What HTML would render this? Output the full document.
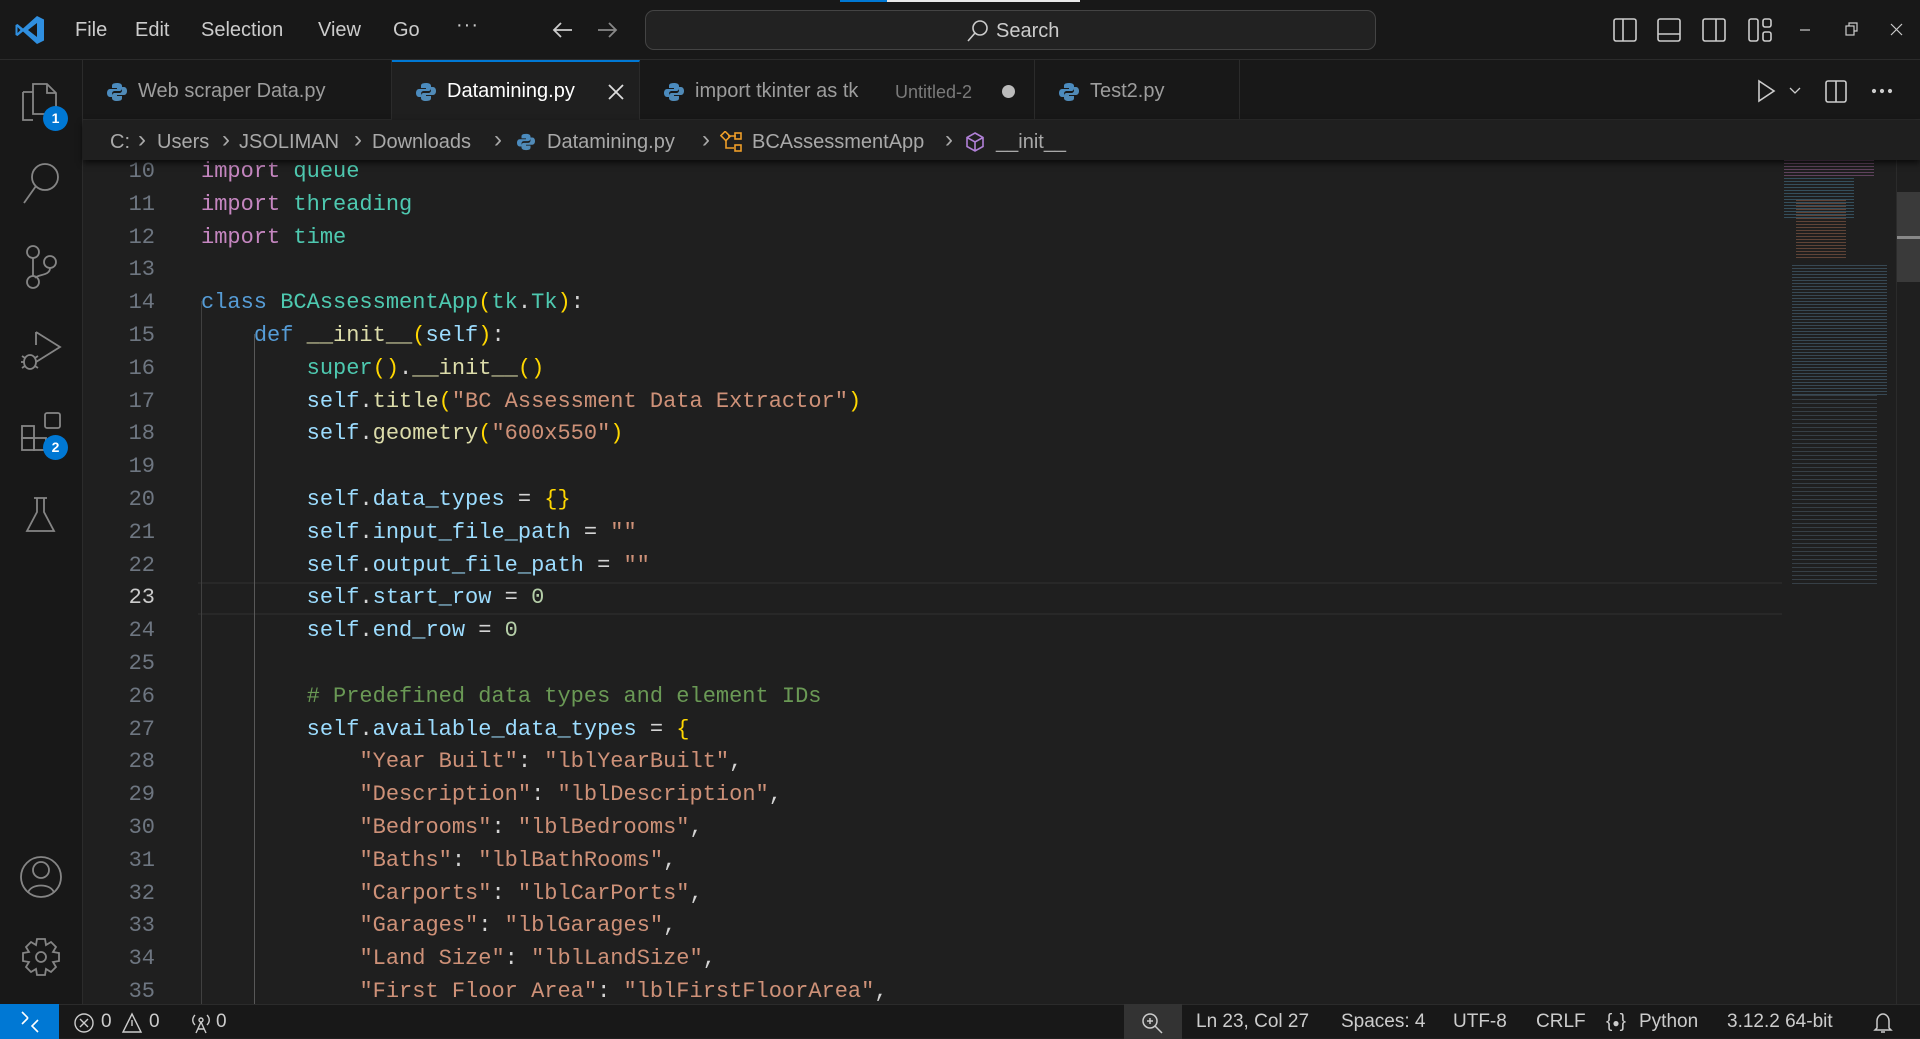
<!DOCTYPE html>
<html><head><meta charset="utf-8">
<style>
*{margin:0;padding:0;box-sizing:border-box}
body{width:1920px;height:1038px;overflow:hidden;background:#1f1f1f;font-family:"Liberation Sans",sans-serif;color:#ccc;position:relative}
.a{position:absolute}
.tb{left:0;top:0;width:1920px;height:60px;background:#181818;border-bottom:1px solid #2b2b2b}
.menu{top:19px;font-size:20px;color:#ccc}
.tabs{left:83px;top:60px;width:1837px;height:60px;background:#181818;border-bottom:1px solid #2b2b2b}
.tab{top:0;height:60px;border-right:1px solid #2b2b2b;font-size:20px;color:#9d9d9d}
.tab span{position:absolute;top:20px;white-space:nowrap}
.act{left:0;top:60px;width:83px;height:944px;background:#181818;border-right:1px solid #2b2b2b}
.bc{left:83px;top:120px;width:1837px;height:40px;background:#1f1f1f;font-size:20px;color:#a9a9a9;box-shadow:0 3px 6px #000a;z-index:3}
.bc span{position:absolute;top:11px;white-space:nowrap}
.bc i{position:absolute;top:6px;font-style:normal;font-size:24px;color:#a9a9a9}
.code{left:84px;top:160px;width:1698px;height:844px;overflow:hidden}
.ln{position:absolute;left:0;width:71px;text-align:right;font-family:"Liberation Mono",monospace;font-size:22px;color:#6e7681;line-height:32.8px}
.tx{position:absolute;left:117px;font-family:"Liberation Mono",monospace;font-size:22px;color:#d4d4d4;line-height:32.8px;white-space:pre}
.k{color:#c586c0}.t{color:#4ec9b0}.b{color:#569cd6}.f{color:#dcdcaa}.v{color:#9cdcfe}.s{color:#ce9178}.c{color:#6a9955}.y{color:#ffd700}.n{color:#b5cea8}
.sb{left:0;top:1004px;width:1920px;height:34px;background:#181818;border-top:1px solid #2b2b2b;font-size:19px;color:#ccc}
.sb span{position:absolute;top:6px;white-space:nowrap}
</style></head><body>

<div class="a tb"></div>
<div class="a" style="left:840px;top:0;width:47px;height:2px;background:#0078d4"></div>
<div class="a" style="left:887px;top:0;width:193px;height:2px;background:#e8e8e8"></div>
<svg class="a" style="left:14px;top:14px" width="32" height="32" viewBox="0 0 32 32"><path d="M23 2 L30 5.5 V26.5 L23 30 L9 17.5 L3.5 22 L1.5 21 V11 L3.5 10 L9 14.5 Z M23 9 L14 16 L23 23 Z M3.5 13 V19 L6.5 16 Z" fill="#2f8fe0"/></svg>
<div class="a menu" style="left:75px">File</div>
<div class="a menu" style="left:135px">Edit</div>
<div class="a menu" style="left:201px">Selection</div>
<div class="a menu" style="left:318px">View</div>
<div class="a menu" style="left:393px">Go</div>
<div class="a menu" style="left:456px;top:14px;letter-spacing:1px">···</div>
<svg class="a" style="left:550px;top:18px" width="72" height="24" viewBox="0 0 72 24" fill="none" stroke-width="1.8"><path d="M22 12H4M11 5L4 12L11 19" stroke="#ccc"/><path d="M48 12H66M59 5L66 12L59 19" stroke="#888"/></svg>
<div class="a" style="left:645px;top:10px;width:731px;height:40px;background:#222;border:1px solid #444;border-radius:9px"></div>
<svg class="a" style="left:966px;top:19px" width="24" height="24" viewBox="0 0 24 24" fill="none" stroke="#ccc" stroke-width="1.6"><circle cx="14" cy="9" r="7"/><path d="M9 14L2 22"/></svg>
<div class="a" style="left:996px;top:20px;font-size:20px;color:#ccc">Search</div>
<svg class="a" style="left:1610px;top:16px" width="310" height="28" viewBox="0 0 310 28" fill="none" stroke="#ccc" stroke-width="1.6">
<rect x="4" y="3" width="22" height="22" rx="2"/><path d="M13 3V25"/>
<rect x="48" y="3" width="22" height="22" rx="2"/><path d="M48 18H70"/>
<rect x="93" y="3" width="22" height="22" rx="2"/><path d="M106 3V25"/>
<rect x="139" y="3" width="9" height="22" rx="2"/><rect x="153" y="3" width="8" height="8" rx="2"/><rect x="153" y="16" width="8" height="9" rx="2"/>
<path d="M190 14H200" stroke-width="1.2"/>
<rect x="236" y="10" width="8" height="9" stroke-width="1.2"/><path d="M239 10V7H247V15H244" stroke-width="1.2"/>
<path d="M281 8L292 19M292 8L281 19" stroke-width="1.2"/>
</svg>

<div class="a tabs">
 <div class="a tab" style="left:0;width:309px"><svg class="a" style="left:24px;top:22px" width="20" height="20" viewBox="0 0 20 20"><path d="M10 1C5 1 5 3 5 4V6H10V7H3C1 7 0 9 0 11S1 15 3 15H5V12C5 10 6 9 8 9H12C14 9 15 8 15 6V4C15 2 13 1 10 1Z" fill="#4b8bbe"/><path d="M10 19C15 19 15 17 15 16V14H10V13H17C19 13 20 11 20 9S19 5 17 5H15V8C15 10 14 11 12 11H8C6 11 5 12 5 14V16C5 18 7 19 10 19Z" fill="#5a9fd4" opacity=".85"/></svg><span style="left:55px">Web scraper Data.py</span></div>
 <div class="a tab" style="left:309px;width:248px;background:#1f1f1f;border-top:2px solid #0078d4;height:61px"><svg class="a" style="left:24px;top:20px" width="20" height="20" viewBox="0 0 20 20"><path d="M10 1C5 1 5 3 5 4V6H10V7H3C1 7 0 9 0 11S1 15 3 15H5V12C5 10 6 9 8 9H12C14 9 15 8 15 6V4C15 2 13 1 10 1Z" fill="#4b8bbe"/><path d="M10 19C15 19 15 17 15 16V14H10V13H17C19 13 20 11 20 9S19 5 17 5H15V8C15 10 14 11 12 11H8C6 11 5 12 5 14V16C5 18 7 19 10 19Z" fill="#5a9fd4" opacity=".85"/></svg><span style="left:55px;top:18px;color:#fff">Datamining.py</span><svg class="a" style="left:215px;top:21px" width="18" height="18" viewBox="0 0 18 18" stroke="#ddd" stroke-width="1.8"><path d="M2 2L16 16M16 2L2 16"/></svg></div>
 <div class="a tab" style="left:557px;width:395px"><svg class="a" style="left:24px;top:22px" width="20" height="20" viewBox="0 0 20 20"><path d="M10 1C5 1 5 3 5 4V6H10V7H3C1 7 0 9 0 11S1 15 3 15H5V12C5 10 6 9 8 9H12C14 9 15 8 15 6V4C15 2 13 1 10 1Z" fill="#4b8bbe"/><path d="M10 19C15 19 15 17 15 16V14H10V13H17C19 13 20 11 20 9S19 5 17 5H15V8C15 10 14 11 12 11H8C6 11 5 12 5 14V16C5 18 7 19 10 19Z" fill="#5a9fd4" opacity=".85"/></svg><span style="left:55px">import tkinter as tk</span><span style="left:255px;top:22px;font-size:18px;color:#7a7a7a">Untitled-2</span><div class="a" style="left:362px;top:25px;width:13px;height:13px;border-radius:50%;background:#bbb"></div></div>
 <div class="a tab" style="left:952px;width:205px"><svg class="a" style="left:24px;top:22px" width="20" height="20" viewBox="0 0 20 20"><path d="M10 1C5 1 5 3 5 4V6H10V7H3C1 7 0 9 0 11S1 15 3 15H5V12C5 10 6 9 8 9H12C14 9 15 8 15 6V4C15 2 13 1 10 1Z" fill="#4b8bbe"/><path d="M10 19C15 19 15 17 15 16V14H10V13H17C19 13 20 11 20 9S19 5 17 5H15V8C15 10 14 11 12 11H8C6 11 5 12 5 14V16C5 18 7 19 10 19Z" fill="#5a9fd4" opacity=".85"/></svg><span style="left:55px">Test2.py</span></div>
</div>
<svg class="a" style="left:1752px;top:77px" width="150" height="28" viewBox="0 0 150 28" fill="none" stroke="#ccc" stroke-width="1.6">
<path d="M7 4L22 14L7 24Z"/><path d="M38 11L43 16L48 11" stroke-width="1.3"/>
<rect x="74" y="4" width="20" height="21" rx="2"/><path d="M84 4V25"/>
<circle cx="122" cy="14" r="1.3" fill="#ccc"/><circle cx="130" cy="14" r="1.3" fill="#ccc"/><circle cx="138" cy="14" r="1.3" fill="#ccc"/>
</svg>

<div class="a bc">
 <span style="left:27px">C:</span><i style="left:55px">›</i>
 <span style="left:74px">Users</span><i style="left:139px">›</i>
 <span style="left:156px">JSOLIMAN</span><i style="left:271px">›</i>
 <span style="left:289px">Downloads</span><i style="left:411px">›</i>
 <svg class="a" style="left:434px;top:13px" width="18" height="18" viewBox="0 0 20 20"><path d="M10 1C5 1 5 3 5 4V6H10V7H3C1 7 0 9 0 11S1 15 3 15H5V12C5 10 6 9 8 9H12C14 9 15 8 15 6V4C15 2 13 1 10 1Z" fill="#4b8bbe"/><path d="M10 19C15 19 15 17 15 16V14H10V13H17C19 13 20 11 20 9S19 5 17 5H15V8C15 10 14 11 12 11H8C6 11 5 12 5 14V16C5 18 7 19 10 19Z" fill="#5a9fd4" opacity=".85"/></svg>
 <span style="left:464px">Datamining.py</span><i style="left:619px">›</i>
 <svg class="a" style="left:637px;top:11px" width="24" height="22" viewBox="0 0 24 22" fill="none" stroke="#ee9d28" stroke-width="1.6"><rect x="2" y="2" width="7" height="6" transform="rotate(45 5.5 5)"/><path d="M6 9V17H14M8 5H16"/><rect x="15" y="2" width="6" height="6"/><rect x="15" y="14" width="6" height="6"/></svg>
 <span style="left:669px">BCAssessmentApp</span><i style="left:862px">›</i>
 <svg class="a" style="left:881px;top:11px" width="22" height="22" viewBox="0 0 22 22" fill="none" stroke="#b180d7" stroke-width="1.6"><path d="M11 2L19 6.5V15.5L11 20L3 15.5V6.5Z M3 6.5L11 11L19 6.5 M11 11V20"/></svg>
 <span style="left:913px">__init__</span>
</div>

<div class="a act"></div>
<svg class="a" style="left:0;top:60px" width="83" height="944" viewBox="0 60 83 944" fill="none" stroke="#858585" stroke-width="1.8">
 <path d="M23 92H33M23 92V120H33M33 84H47L56 93V114H33Z M47 84V93H56"/>
 <circle cx="45" cy="177" r="13"/><path d="M36 186L24 203"/>
 <circle cx="33" cy="252" r="6"/><circle cx="33" cy="282" r="6"/><circle cx="50" cy="262" r="6"/><path d="M33 258V276M50 268C50 276 38 274 35 278"/>
 <path d="M36 332L60 347L36 362M36 332V345"/><ellipse cx="30" cy="362" rx="6" ry="7"/><path d="M22 356L25 358M22 368L25 366M38 356L35 358M38 368L35 366M21 362H24"/>
 <rect x="22" y="426" width="12" height="12"/><rect x="22" y="438" width="12" height="12"/><rect x="34" y="438" width="12" height="12"/><rect x="45" y="413" width="15" height="15" rx="2"/>
 <path d="M34 498H47M37 498V512L27 531H54L44 512V498"/>
 <circle cx="41" cy="877" r="20"/><circle cx="41" cy="870" r="8"/><path d="M28 893C30 883 52 883 54 893"/>
 <path d="M37 939H45L46 945L51 942L56 947L53 952L59 953V961L53 962L56 967L51 972L46 969L45 975H37L36 969L31 972L26 967L29 962L23 961V953L29 952L26 947L31 942L36 945Z"/><circle cx="41" cy="957" r="5"/>
</svg>
<div class="a" style="left:43px;top:106px;width:25px;height:25px;border-radius:50%;background:#0078d4;color:#fff;font-size:14px;font-weight:bold;text-align:center;line-height:25px">1</div>
<div class="a" style="left:43px;top:435px;width:25px;height:25px;border-radius:50%;background:#0078d4;color:#fff;font-size:14px;font-weight:bold;text-align:center;line-height:25px">2</div>

<div class="a code">
 <div class="a" style="left:114px;top:422px;width:1584px;height:33px;border-top:2px solid #282828;border-bottom:2px solid #282828"></div>
 <div class="a" style="left:117px;top:141px;width:1px;height:720px;background:#404040"></div>
 <div class="a" style="left:170px;top:174px;width:1px;height:690px;background:#585858"></div>
 <div class="ln" style="top:-4px">10<br>11<br>12<br>13<br>14<br>15<br>16<br>17<br>18<br>19<br>20<br>21<br>22<br><span style="color:#ccc">23</span><br>24<br>25<br>26<br>27<br>28<br>29<br>30<br>31<br>32<br>33<br>34<br>35</div>
 <div class="tx" style="top:-4px"><span class="k">import</span> <span class="t">queue</span>
<span class="k">import</span> <span class="t">threading</span>
<span class="k">import</span> <span class="t">time</span>

<span class="b">class</span> <span class="t">BCAssessmentApp</span><span class="y">(</span><span class="t">tk</span>.<span class="t">Tk</span><span class="y">)</span>:
    <span class="b">def</span> <span class="f">__init__</span><span class="y">(</span><span class="v">self</span><span class="y">)</span>:
        <span class="t">super</span><span class="y">()</span>.<span class="f">__init__</span><span class="y">()</span>
        <span class="v">self</span>.<span class="f">title</span><span class="y">(</span><span class="s">"BC Assessment Data Extractor"</span><span class="y">)</span>
        <span class="v">self</span>.<span class="f">geometry</span><span class="y">(</span><span class="s">"600x550"</span><span class="y">)</span>

        <span class="v">self</span>.<span class="v">data_types</span> = <span class="y">{}</span>
        <span class="v">self</span>.<span class="v">input_file_path</span> = <span class="s">""</span>
        <span class="v">self</span>.<span class="v">output_file_path</span> = <span class="s">""</span>
        <span class="v">self</span>.<span class="v">start_row</span> = <span class="n">0</span>
        <span class="v">self</span>.<span class="v">end_row</span> = <span class="n">0</span>

        <span class="c"># Predefined data types and element IDs</span>
        <span class="v">self</span>.<span class="v">available_data_types</span> = <span class="y">{</span>
            <span class="s">"Year Built"</span>: <span class="s">"lblYearBuilt"</span>,
            <span class="s">"Description"</span>: <span class="s">"lblDescription"</span>,
            <span class="s">"Bedrooms"</span>: <span class="s">"lblBedrooms"</span>,
            <span class="s">"Baths"</span>: <span class="s">"lblBathRooms"</span>,
            <span class="s">"Carports"</span>: <span class="s">"lblCarPorts"</span>,
            <span class="s">"Garages"</span>: <span class="s">"lblGarages"</span>,
            <span class="s">"Land Size"</span>: <span class="s">"lblLandSize"</span>,
            <span class="s">"First Floor Area"</span>: <span class="s">"lblFirstFloorArea"</span>,</div>
</div>

<div class="a" style="left:1782px;top:160px;width:114px;height:425px;overflow:hidden">
 <div class="a" style="left:2px;top:0;width:90px;height:16px;background:repeating-linear-gradient(#8a5a86 0 1px,transparent 1px 3px);opacity:.6"></div>
 <div class="a" style="left:2px;top:18px;width:70px;height:40px;background:repeating-linear-gradient(#4f8aa8 0 1px,transparent 1px 3px);opacity:.45"></div>
 <div class="a" style="left:14px;top:40px;width:50px;height:60px;background:repeating-linear-gradient(#a0694f 0 1px,transparent 1px 3px);opacity:.5"></div>
 <div class="a" style="left:10px;top:105px;width:95px;height:130px;background:repeating-linear-gradient(#5b87a3 0 1px,transparent 1px 3px);opacity:.4"></div>
 <div class="a" style="left:10px;top:235px;width:85px;height:190px;background:repeating-linear-gradient(#6c8aa0 0 1px,transparent 1px 4px);opacity:.3"></div>
</div>
<div class="a" style="left:1896px;top:160px;width:24px;height:844px;border-left:1px solid #2b2b2b"></div>
<div class="a" style="left:1897px;top:192px;width:23px;height:90px;background:#3a3a3a"></div>
<div class="a" style="left:1897px;top:236px;width:23px;height:3px;background:#888"></div>

<div class="a sb">
 <div class="a" style="left:0;top:-1px;width:59px;height:35px;background:#0078d4"></div>
 <svg class="a" style="left:18px;top:6px" width="24" height="22" viewBox="0 0 24 22" fill="none" stroke="#fff" stroke-width="1.6"><path d="M4 13L10 7M10 7L4 1M20 9L14 15L20 21"/></svg>
 <svg class="a" style="left:74px;top:7px" width="100" height="22" viewBox="0 0 100 22" fill="none" stroke="#ccc" stroke-width="1.4"><circle cx="10" cy="11" r="9"/><path d="M6 7L14 15M14 7L6 15"/><path d="M58 2L67 20H49Z M58 8V14"/></svg>
 <span style="left:101px">0</span><span style="left:149px">0</span>
 <svg class="a" style="left:189px;top:7px" width="24" height="22" viewBox="0 0 24 22" fill="none" stroke="#ccc" stroke-width="1.4"><circle cx="12" cy="8" r="2"/><path d="M12 10L7 21M12 10L17 21M9 17H15M6 3C3 6 3 10 6 13M18 3C21 6 21 10 18 13"/></svg>
 <span style="left:216px">0</span>
 <div class="a" style="left:1124px;top:-1px;width:58px;height:35px;background:#333"></div>
 <svg class="a" style="left:1140px;top:6px" width="24" height="24" viewBox="0 0 24 24" fill="none" stroke="#ccc" stroke-width="1.5"><circle cx="10" cy="10" r="7"/><path d="M15 15L22 22M7 10H13M10 7V13"/></svg>
 <span style="left:1196px">Ln 23, Col 27</span>
 <span style="left:1341px">Spaces: 4</span>
 <span style="left:1453px">UTF-8</span>
 <span style="left:1536px">CRLF</span>
 <span style="left:1606px">{<small style="font-size:12px">●</small>}</span>
 <span style="left:1639px">Python</span>
 <span style="left:1727px">3.12.2 64-bit</span>
 <svg class="a" style="left:1872px;top:6px" width="22" height="24" viewBox="0 0 22 24" fill="none" stroke="#ccc" stroke-width="1.5"><path d="M5 17V10C5 6 8 3 11 3S17 6 17 10V17L19 19H3Z M9 21H13"/></svg>
</div>
</body></html>
